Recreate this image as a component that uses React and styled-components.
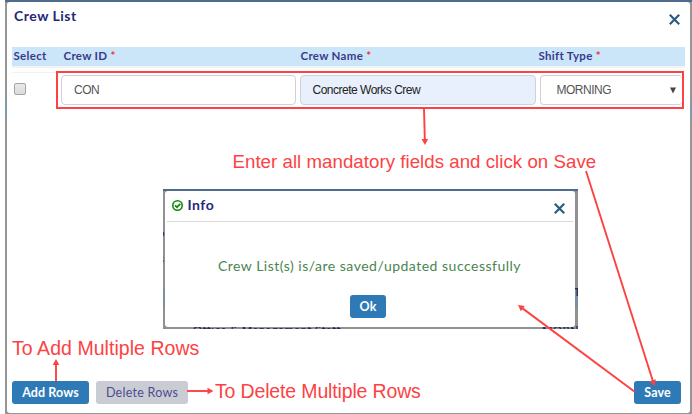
import React from "react";
import styled, { createGlobalStyle } from "styled-components";

const GlobalStyle = createGlobalStyle`
  * { box-sizing: border-box; }
  body { margin: 0; background: #fff; overflow: hidden; }
  button, input { font: inherit; margin: 0; }
`;

const Page = styled.div`
  position: relative;
  width: 692px;
  height: 414px;
  padding-left: 5px;
  overflow: hidden;
  background: #fff;
  font-family: Lato, sans-serif;
`;

const Backdrop = styled.div`
  height: 414px;
  padding: 2px 2px 1px 2px;
  background:
    linear-gradient(#7f98ab, #7f98ab) 0 100px / 100% 19px no-repeat,
    linear-gradient(#4c6d8c, #4c6d8c) 0 0 / 100% 2px no-repeat,
    #959595;
`;

const Dialog = styled.section`
  height: 411px;
  display: flex;
  flex-direction: column;
  background: #fff;
  border-radius: 3px;
  padding: 0 5px;
`;

const DialogHeader = styled.header`
  display: flex;
  justify-content: space-between;
  height: 45px;
  padding: 5px 5px 0 2px;
`;

const Title = styled.h1`
  margin: 0;
  font-size: 14px;
  line-height: 17px;
  font-weight: 700;
  letter-spacing: 0.5px;
  color: #26267c;
  white-space: nowrap;
`;

const CloseButton = styled.button`
  width: 11px;
  height: 11px;
  padding: 0;
  border: 0;
  background: none;
  margin-top: 7px;
  svg { display: block; }
`;

const HeadRow = styled.div`
  display: grid;
  grid-template-columns: 50px 237px 238px 1fr;
  width: 673px;
  height: 21px;
  padding-left: 1.5px;
  background: #cbe6f9;
  border-bottom: 2px solid #f1f3f4;
  font-size: 11.5px;
  line-height: 18px;
  font-weight: 700;
  letter-spacing: 0.3px;
  color: #3a3a8c;
  white-space: nowrap;
`;

const Required = styled.span`
  color: #f5333f;
  font-weight: 700;
`;

const DataRow = styled.div`
  display: flex;
  align-items: flex-start;
  margin-top: 3px;
`;

const SelectCell = styled.div`
  width: 44px;
  height: 38px;
  border-top: 1px solid #f1f1f1;
  margin-top: 1px;
  padding: 10px 0 0 2px;
`;

const CheckBox = styled.span.attrs({ role: "checkbox", "aria-checked": false })`
  display: block;
  width: 12px;
  height: 12px;
  border: 1px solid #a5a5a5;
  border-radius: 2px;
  background: linear-gradient(#e9e9e9, #dcdcdc);
`;

const Fields = styled.div`
  display: flex;
  gap: 4px;
  width: 628px;
  height: 38px;
  padding: 2px 0 0 3px;
  border: 2px solid #fd4244;
`;

const Field = styled.div`
  display: flex;
  align-items: center;
  justify-content: space-between;
  flex: 0 0 ${(p) => p.$width}px;
  height: 30px;
  padding: 0 6px 0 ${(p) => p.$indent}px;
  border: 1px solid #d0d1de;
  border-right-width: ${(p) => (p.$clipped ? 0 : 1)}px;
  border-radius: 4px;
  background: ${(p) => (p.$filled ? "#e8effd" : "#fff")};
  color: ${(p) => (p.$filled ? "#222" : "#555")};
  font: 12px/16px "Liberation Sans", Arial, sans-serif;
  letter-spacing: -0.5px;
  white-space: nowrap;
`;

const Footer = styled.footer`
  display: flex;
  gap: 7px;
  margin-top: auto;
  height: 32px;
  padding-right: 4px;
`;

const Button = styled.button`
  width: ${(p) => p.$width}px;
  height: 23px;
  padding: 0;
  border: 0;
  border-radius: 3px;
  background: ${(p) => (p.$muted ? "#c9cdd3" : "#2e7ab6")};
  color: ${(p) => (p.$muted ? "#4d4b92" : "#fff")};
  font-size: 12.5px;
  line-height: 24px;
  font-weight: ${(p) => (p.$muted ? 400 : 700)};
  letter-spacing: ${(p) => (p.$muted ? 0.25 : 0.1)}px;
  white-space: nowrap;
  ${(p) => p.$end && "margin-left: auto;"}
`;

const InfoBackdrop = styled.div`
  position: absolute;
  left: 163px;
  top: 189px;
  width: 415px;
  height: 140px;
  padding: 2px 3px 2px 2px;
  overflow: hidden;
  background:
    linear-gradient(#7990a1, #7990a1) 0 100px / 100% 19px no-repeat,
    linear-gradient(#4c6d8c, #4c6d8c) 0 0 / 100% 2px no-repeat,
    #919191;
`;

const InfoDialog = styled.section`
  position: relative;
  display: flex;
  flex-direction: column;
  align-items: center;
  height: 136px;
  padding: 0 2px;
  border-radius: 3px;
  background: #fff;
`;

const InfoHeader = styled.header`
  display: flex;
  justify-content: space-between;
  width: 100%;
  height: 31px;
  padding: 5px 8px 0 5px;
  border-bottom: 1px solid #dadada;
`;

const InfoTitle = styled.div`
  display: flex;
  gap: 4.5px;
  svg { margin-top: 4px; }
`;

const Message = styled.p`
  margin: 35px 1px 0 0;
  font-size: 14px;
  line-height: 17px;
  letter-spacing: 0.5px;
  color: #4a8550;
  white-space: nowrap;
`;

const OkSlot = styled.div`
  margin-top: 21px;
  margin-right: 4px;
`;

const Behind = styled.span`
  position: absolute;
  left: ${(p) => p.$x}px;
  top: ${(p) => p.$y}px;
  font-size: 11px;
  line-height: 14px;
  font-weight: 700;
  letter-spacing: 0.55px;
  color: #26295c;
  white-space: nowrap;
`;

const Note = styled.div`
  position: absolute;
  left: ${(p) => p.$x}px;
  top: ${(p) => p.$y}px;
  font: ${(p) => p.$size}px/22px "Liberation Sans", Arial, sans-serif;
  letter-spacing: ${(p) => p.$spacing || 0}px;
  color: #fd4244;
  white-space: nowrap;
`;

const Arrows = styled.svg`
  position: absolute;
  inset: 0;
  pointer-events: none;
`;

const Cross = () => (
  <svg width="11" height="11" viewBox="0 0 11 11">
    <path d="M0.8 0.8L10.2 10.2M10.2 0.8L0.8 10.2" stroke="#2b5c7e" strokeWidth="2.2" />
  </svg>
);

const CheckCircle = () => (
  <svg width="11" height="11" viewBox="0 0 11 11" fill="none" stroke="#118a11">
    <circle cx="5.5" cy="5.5" r="4.7" strokeWidth="1.6" />
    <path d="M3 5.3L5 7.2L8.3 3.9" strokeWidth="1.8" />
  </svg>
);

function Arrow({ x1, y1, x2, y2 }) {
  const length = Math.hypot(x2 - x1, y2 - y1);
  const angle = (Math.atan2(y2 - y1, x2 - x1) * 180) / Math.PI;
  return (
    <g transform={`translate(${x1} ${y1}) rotate(${angle})`}>
      <path d={`M0 0H${length - 4}`} stroke="#fd4244" strokeWidth="1.9" />
      <path d={`M${length} 0l-6 -3.3v6.6z`} fill="#fd4244" />
    </g>
  );
}

export default function App() {
  return (
    <Page>
      <GlobalStyle />
      <Backdrop>
        <Dialog>
          <DialogHeader>
            <Title>Crew List</Title>
            <CloseButton aria-label="Close"><Cross /></CloseButton>
          </DialogHeader>
          <HeadRow>
            <span>Select</span>
            <span>Crew ID <Required>*</Required></span>
            <span>Crew Name <Required>*</Required></span>
            <span>Shift Type <Required>*</Required></span>
          </HeadRow>
          <DataRow>
            <SelectCell><CheckBox /></SelectCell>
            <Fields>
              <Field $width={235} $indent={12}>CON</Field>
              <Field $width={236} $indent={11.5} $filled>Concrete Works Crew</Field>
              <Field $width={142} $indent={15.5} $clipped>
                MORNING
                <svg width="6" height="7" viewBox="0 0 6 7"><path d="M0 0.5H6L3 6.5Z" fill="#444" /></svg>
              </Field>
            </Fields>
          </DataRow>
          <Footer>
            <Button $width={77}>Add Rows</Button>
            <Button $width={92} $muted>Delete Rows</Button>
            <Button $width={47} $end>Save</Button>
          </Footer>
        </Dialog>
      </Backdrop>

      <InfoBackdrop>
        <Behind $x={-5} $y={37}>o</Behind>
        <Behind $x={-4} $y={63}>s</Behind>
        <Behind $x={411} $y={96}>Ty</Behind>
        <Behind $x={30} $y={134}>Office &amp; Management Staff</Behind>
        <Behind $x={379} $y={134}>MORNING</Behind>
        <InfoDialog>
          <InfoHeader>
            <InfoTitle><CheckCircle /><Title as="h2">Info</Title></InfoTitle>
            <CloseButton aria-label="Close"><Cross /></CloseButton>
          </InfoHeader>
          <Message>Crew List(s) is/are saved/updated successfully</Message>
          <OkSlot><Button $width={36}>Ok</Button></OkSlot>
        </InfoDialog>
      </InfoBackdrop>

      <Note $x={232.5} $y={151} $size={18.67} $spacing={0.04}>Enter all mandatory fields and click on Save</Note>
      <Note $x={12} $y={336.5} $size={19.5} $spacing={0.05}>To Add Multiple Rows</Note>
      <Note $x={215} $y={379.5} $size={19.5} $spacing={-0.15}>To Delete Multiple Rows</Note>

      <Arrows width="692" height="414" viewBox="0 0 692 414">
        <Arrow x1={424} y1={109} x2={425} y2={145} />
        <Arrow x1={586} y1={171} x2={654.5} y2={386} />
        <Arrow x1={635} y1={392} x2={518} y2={305} />
        <Arrow x1={56} y1={381} x2={56} y2={359} />
        <Arrow x1={187} y1={391} x2={213.5} y2={391} />
      </Arrows>
    </Page>
  );
}
